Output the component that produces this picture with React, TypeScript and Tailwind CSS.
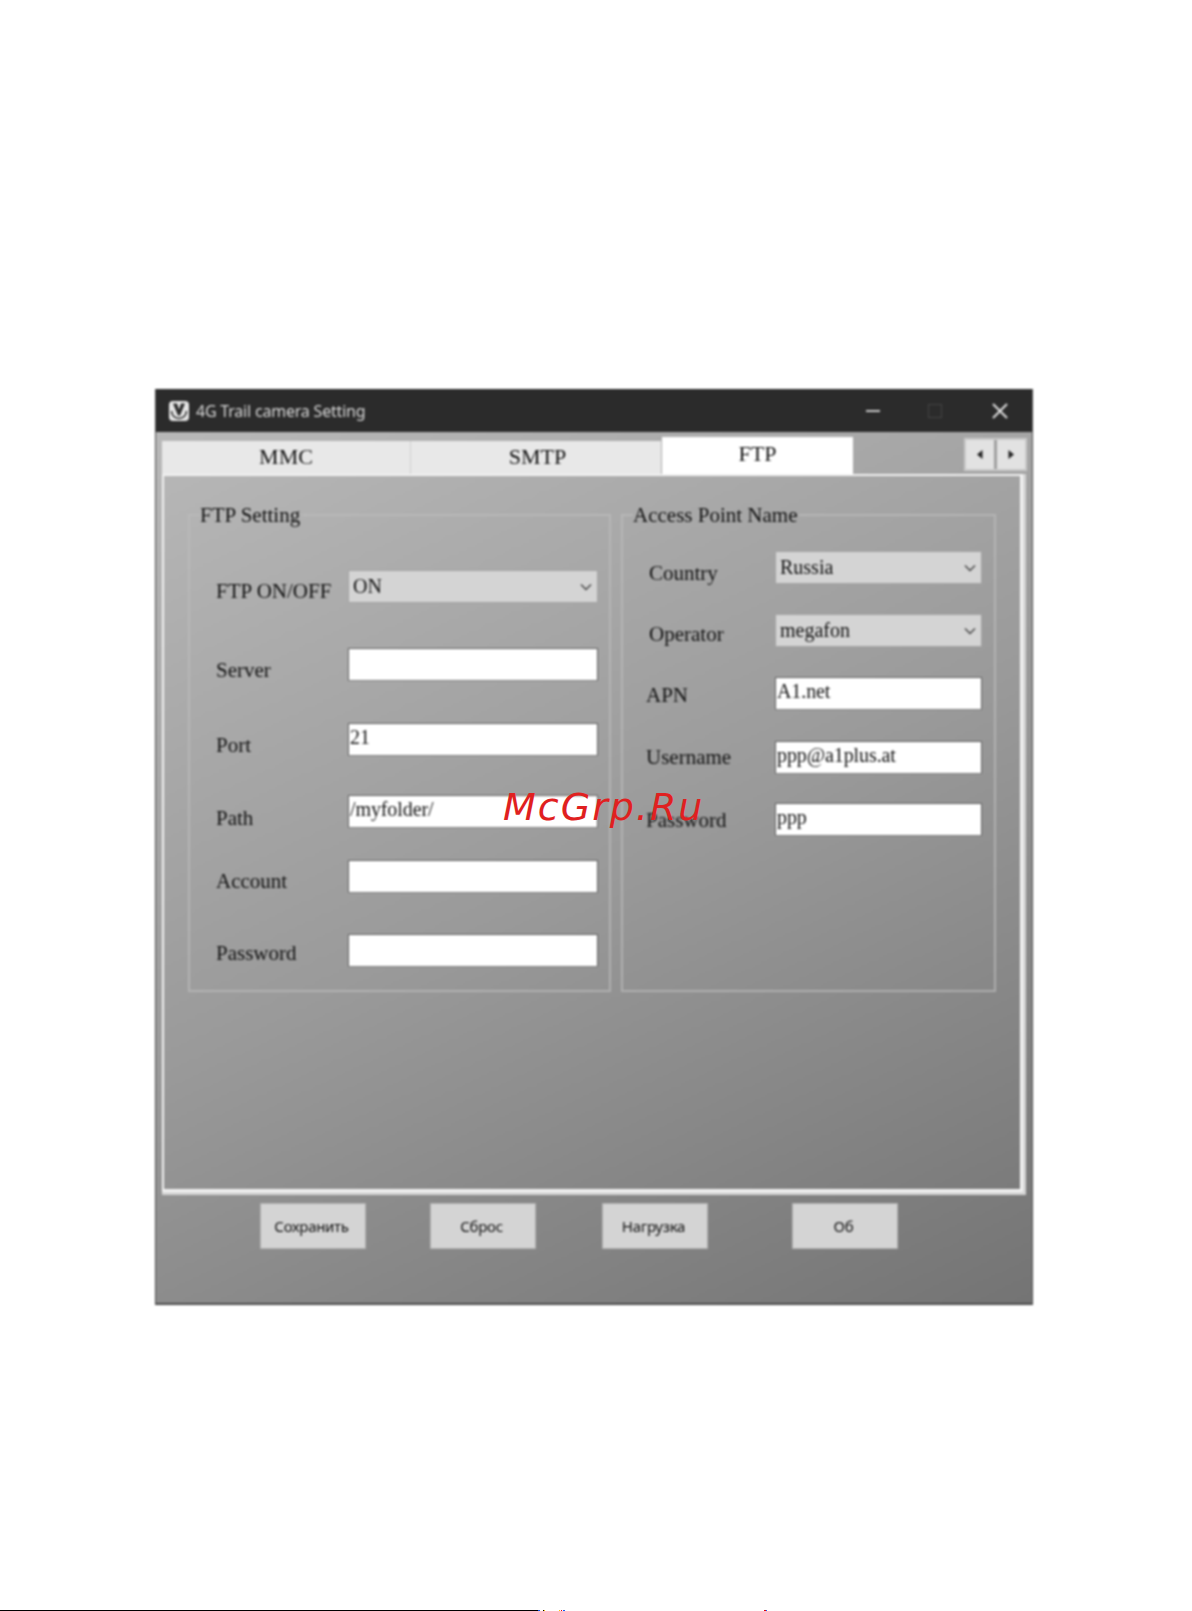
import React from 'react';

interface FieldRow {
  label: string;
  value?: string;
  select?: boolean;
  rowClass: string;
  labelClass: string;
}

// left group
const ftpRows: FieldRow[] = [
  { label: 'FTP ON/OFF', value: 'ON', select: true, rowClass: 'mt-[43px]', labelClass: 'pt-[8px] w-[132px]' },
  { label: 'Server', rowClass: 'mt-[45px]', labelClass: 'pt-[9px] w-[132px]' },
  { label: 'Port', value: '21', rowClass: 'mt-[42px]', labelClass: 'pt-[9px] w-[132px]' },
  { label: 'Path', value: '/myfolder/', rowClass: 'mt-[39px]', labelClass: 'pt-[10px] w-[132px]' },
  { label: 'Account', rowClass: 'mt-[32px]', labelClass: 'pt-[8px] w-[132px]' },
  { label: 'Password', rowClass: 'mt-[41px]', labelClass: 'pt-[6px] w-[132px]' },
];

// right group
const apnRows: FieldRow[] = [
  { label: 'Country', value: 'Russia', select: true, rowClass: 'mt-[24px]', labelClass: 'pt-[9px] pl-[3px] w-[129px]' },
  { label: 'Operator', value: 'megafon', select: true, rowClass: 'mt-[30px]', labelClass: 'pt-[7px] pl-[3px] w-[129px]' },
  { label: 'APN', value: 'A1.net', rowClass: 'mt-[30px]', labelClass: 'pt-[5px] w-[129px]' },
  { label: 'Username', value: 'ppp@a1plus.at', rowClass: 'mt-[31px]', labelClass: 'pt-[3px] w-[129px]' },
  { label: 'Password', value: 'ppp', rowClass: 'mt-[29px]', labelClass: 'pt-[4px] w-[129px]' },
];

function Row({ row, boxWidth }: { row: FieldRow; boxWidth: string }) {
  return (
    <div className={`flex h-[33px] ${row.rowClass}`}>
      <span className={`shrink-0 text-[21px] leading-[26px] text-[#111] ${row.labelClass}`}>{row.label}</span>
      {row.select ? (
        <div className={`flex h-[33px] items-center justify-between border border-[#a3a3a3] bg-[#d4d4d4] pl-[4px] pr-[4px] text-[20px] leading-[26px] text-[#111] ${boxWidth}`}>
          <span className="-mt-[2px]">{row.value}</span>
          <svg width="14" height="8" viewBox="0 0 14 8" fill="none" stroke="#444" strokeWidth="1.4">
            <path d="M2 1.5 7 6.5 12 1.5" />
          </svg>
        </div>
      ) : (
        <div className={`h-[33px] border border-[#5e5e5e] border-b-[#808080] bg-white pl-[1px] text-[20px] leading-[26px] tracking-[-0.1px] text-[#111] ${boxWidth}`}>
          {row.value}
        </div>
      )}
    </div>
  );
}

function Group({ title, rows, widthClass, boxWidth, padClass }: { title: string; rows: FieldRow[]; widthClass: string; boxWidth: string; padClass: string }) {
  return (
    <fieldset className={`h-[489px] shrink-0 border-2 border-[#bcbcbc]/70 ${widthClass}`}>
      <legend className="ml-[10px] h-[24px] pr-[2px] text-[21px] leading-[24px] text-[#111]">{title}</legend>
      <div className={padClass}>
        {rows.map((row) => (
          <Row key={row.label} row={row} boxWidth={boxWidth} />
        ))}
      </div>
    </fieldset>
  );
}

function ActionButton({ label, className }: { label: string; className: string }) {
  return (
    <button className={`h-[46px] w-[106px] border border-[#b0b0b0] bg-[#d4d4d4] pr-[3px] text-[15px] tracking-[-0.3px] text-[#111] ${className}`}>
      {label}
    </button>
  );
}

export default function App() {
  return (
    <div className="relative flex h-[1611px] flex-col bg-white font-['Liberation_Serif',serif]">
      <div className="pt-[389px] pl-[155px] blur-[0.8px]">
        <div className="flex h-[916px] w-[878px] flex-col border-r border-b-2 border-l border-[#4a4a4a]">
          {/* タイトルバー */}
          <div className="flex h-[43px] shrink-0 items-center bg-[#2b2b2b] pl-[12px] font-['Noto_Sans',sans-serif] text-[#d8d8d8]">
            <svg width="22" height="22" viewBox="0 0 22 22" className="shrink-0">
              <rect x="1" y="1" width="20" height="20" rx="4" fill="#e6e6e6" />
              <path d="M5 3.5h4l2 6 2-6h4l-5 12h-2z" fill="#2b2b2b" />
              <path d="M3.5 11a7.5 7.5 0 0 0 15 0" fill="none" stroke="#2b2b2b" strokeWidth="1.6" />
            </svg>
            <span className="ml-[6px] text-[16px] tracking-[-0.2px]">4G Trail camera Setting</span>
            <div className="ml-auto mr-[24px] flex items-center gap-[50px]">
              <div className="-mr-[2px] h-[2px] w-[14px] bg-[#c8c8c8]" />
              <div className="h-[14px] w-[14px] border border-[#444]" />
              <svg width="16" height="16" viewBox="0 0 16 16" stroke="#e0e0e0" strokeWidth="2">
                <path d="M1 1 15 15M15 1 1 15" />
              </svg>
            </div>
          </div>

          <div className="flex flex-1 flex-col bg-[linear-gradient(155deg,#b8b8b8_0%,#9a9a9a_50%,#747474_100%)] pl-[6px] pr-[6px]">
            {/* タブ */}
            <div className="flex h-[42px] shrink-0 items-end">
              <div className="flex h-[33px] w-[249px] items-center justify-center border-r border-[#cfcfcf] bg-[#e8e8e8] pb-[2px] text-[22px] text-[#111]">MMC</div>
              <div className="flex h-[33px] w-[250px] items-center justify-center bg-[#e8e8e8] pb-[2px] pl-[3px] text-[22px] text-[#111]">SMTP</div>
              <div className="ml-[1px] flex h-[37px] w-[191px] items-center justify-center bg-white pb-[4px] text-[22px] text-[#111]">FTP</div>
              <div className="mb-[3px] ml-auto mr-[-1px] flex h-[33px] gap-[3px] border-2 border-[#c9c9c9] bg-[#a0a0a0]">
                <div className="flex w-[28px] items-center justify-center bg-[#e2e2e2]">
                  <svg width="6" height="9" viewBox="0 0 6 9"><path d="M5.5 0v9L0 4.5z" fill="#222" /></svg>
                </div>
                <div className="flex w-[28px] items-center justify-center bg-[#e2e2e2]">
                  <svg width="6" height="9" viewBox="0 0 6 9"><path d="M.5 0v9L6 4.5z" fill="#222" /></svg>
                </div>
              </div>
            </div>

            {/* パネル */}
            <div className="h-[721px] shrink-0 border-r-[3px] border-b-[3px] border-[#d6d6d6]">
              <div className="h-full border-2 border-r-[3px] border-b-[3px] border-[#f2f2f2] pt-[27px] pl-[24px]">
                <div className="flex gap-[10px]">
                  <Group title="FTP Setting" rows={ftpRows} widthClass="w-[423px]" boxWidth="w-[250px]" padClass="pl-[26px]" />
                  <Group title="Access Point Name" rows={apnRows} widthClass="w-[375px]" boxWidth="w-[207px]" padClass="pl-[23px]" />
                </div>
              </div>
            </div>

            {/* ボタン */}
            <div className="flex pt-[8px] font-['Noto_Sans',sans-serif]">
              <ActionButton label="Сохранить" className="ml-[98px]" />
              <ActionButton label="Сброс" className="ml-[64px]" />
              <ActionButton label="Нагрузка" className="ml-[66px]" />
              <ActionButton label="Об" className="ml-[84px]" />
            </div>
          </div>
        </div>
      </div>

      {/* 透かし */}
      <div className="absolute top-[783px] left-[503px] font-['DejaVu_Sans',sans-serif] text-[38px] leading-[48px] tracking-[2px] text-[#e02020] italic">
        McGrp.Ru
      </div>

      {/* 下端のライン */}
      <div className="absolute bottom-0 left-0 flex h-[1px] w-full">
        <div className="h-full w-[538px] bg-black" />
        <div className="h-full w-[2px] bg-blue-600" />
        <div className="ml-[3px] h-full w-[1px] bg-black" />
        <div className="h-full w-[1px] bg-yellow-400" />
        <div className="ml-[14px] h-full w-[1px] bg-yellow-400" />
        <div className="ml-[1px] h-full w-[1px] bg-red-600" />
        <div className="ml-[1px] h-full w-[2px] bg-blue-600" />
        <div className="ml-[199px] h-full w-[2px] bg-red-600" />
        <div className="h-full w-[1px] bg-blue-600" />
      </div>
    </div>
  );
}
